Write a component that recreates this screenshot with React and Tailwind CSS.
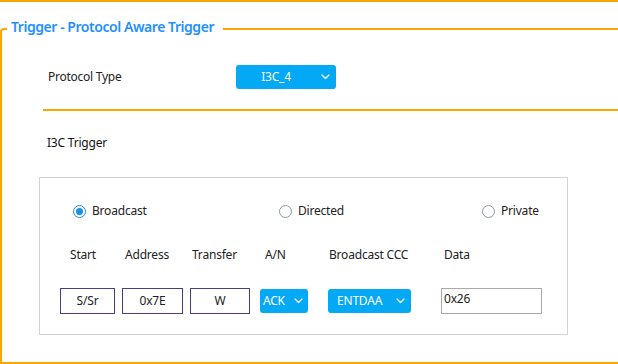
import React from "react";

const font = { fontFamily: '"Noto Sans", "Open Sans", sans-serif' };

function Chevron({ className = "" }) {
  return (
    <svg className={className} width="9" height="6" viewBox="0 0 9 6" fill="none">
      <path d="M1 1l3.5 3.5L8 1" stroke="white" strokeWidth="1.3" strokeLinecap="round" strokeLinejoin="round" />
    </svg>
  );
}

function Radio({ checked, label, className = "" }) {
  return (
    <div className={`flex items-center gap-[6px] ${className}`}>
      <span
        className={`flex h-[13px] w-[13px] items-center justify-center rounded-full border ${
          checked ? "border-[#1a8fe3]" : "border-[#8a98a4]"
        }`}
      >
        {checked && <span className="h-[7px] w-[7px] rounded-full bg-[#1a8fe3]" />}
      </span>
      <span className="text-[12px] leading-[16px] tracking-[-0.2px] text-[#222]">{label}</span>
    </div>
  );
}

export default function App() {
  return (
    <div className="h-[364px] w-[618px] overflow-hidden bg-white" style={font}>
      {/* bottom edge of the section above */}
      <div className="h-[2px] w-full bg-[#FFA500]" />

      {/* Protocol Aware Trigger group */}
      <fieldset className="mt-[15px] h-[347px] w-[640px] rounded-tl-[4px] border-2 border-[#FFA500] p-0">
        <legend className="ml-[5px] pb-[4px] pl-[4px] pr-[9px] text-[14px] font-semibold leading-[20px] tracking-[-0.45px] text-[#1E90FF]">
          Trigger - Protocol Aware Trigger
        </legend>

        {/* Protocol type */}
        <div className="mt-[24px] flex h-[24px] items-center pl-[46px]">
          <div className="w-[188px] text-[12px] tracking-[-0.25px] text-[#222]">Protocol Type</div>
          <button className="relative flex h-[24px] w-[100px] items-center rounded-[3px] bg-[#03A9F4] text-white">
            <span className="w-[80px] text-center text-[12px] tracking-[-0.2px]">I3C_4</span>
            <Chevron className="ml-[5px]" />
          </button>
        </div>

        <div className="ml-[41px] mt-[20px] h-[2px] bg-[#FFA500]" />

        <div className="ml-[45px] mt-[24px] text-[12px] leading-[16px] tracking-[-0.2px] text-[#111]">I3C Trigger</div>

        {/* I3C trigger box */}
        <div className="ml-[37px] mt-[26px] h-[158px] w-[529px] border border-[#d3d3d3]">
          <div className="mt-[25px] flex pl-[33px]">
            <Radio checked label="Broadcast" className="w-[206px]" />
            <Radio label="Directed" className="w-[203px]" />
            <Radio label="Private" />
          </div>

          <div className="mt-[28px] flex h-[16px] pl-[30px] text-[12px] leading-[16px] tracking-[-0.2px] text-[#222]">
            <span className="w-[55px]">Start</span>
            <span className="w-[67px]">Address</span>
            <span className="w-[73px]">Transfer</span>
            <span className="w-[64px]">A/N</span>
            <span className="w-[115px]">Broadcast CCC</span>
            <span>Data</span>
          </div>

          <div className="mt-[25px] flex h-[26px] items-center pl-[20px] text-[12px] tracking-[-0.2px] text-[#222]">
            <div className="flex h-[26px] w-[55px] items-center justify-center border border-[#483D8B]">S/Sr</div>
            <div className="ml-[7px] flex h-[26px] w-[61px] items-center justify-center border border-[#483D8B]">0x7E</div>
            <div className="ml-[7px] flex h-[26px] w-[60px] items-center justify-center border border-[#483D8B]">W</div>
            <button className="ml-[10px] flex h-[24px] w-[48px] items-center rounded-[3px] bg-[#03A9F4] pl-[3px] text-white">
              <span className="text-[12px]">ACK</span>
              <Chevron className="ml-[9px]" />
            </button>
            <button className="ml-[20px] flex h-[24px] w-[83px] items-center rounded-[3px] bg-[#03A9F4] pl-[9px] text-white">
              <span className="text-[12px]">ENTDAA</span>
              <Chevron className="ml-[14px]" />
            </button>
            <div className="ml-[30px] h-[26px] w-[101px] border border-[#a9a9a9] pl-[2px] pt-[2px] leading-[16px]">0x26</div>
          </div>
        </div>
      </fieldset>
    </div>
  );
}
